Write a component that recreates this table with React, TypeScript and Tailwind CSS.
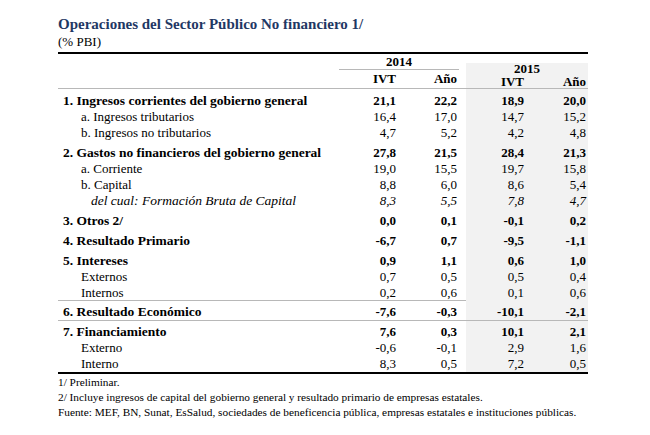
type Row = {
  label: string;
  vals: string[];
  kind: "group" | "sub" | "note";
  line?: boolean;
  tight?: boolean;
};

const rows: Row[] = [
  { label: "1. Ingresos corrientes del gobierno general", vals: ["21,1", "22,2", "18,9", "20,0"], kind: "group" },
  { label: "a. Ingresos tributarios", vals: ["16,4", "17,0", "14,7", "15,2"], kind: "sub" },
  { label: "b. Ingresos no tributarios", vals: ["4,7", "5,2", "4,2", "4,8"], kind: "sub" },
  { label: "2. Gastos no financieros del gobierno general", vals: ["27,8", "21,5", "28,4", "21,3"], kind: "group" },
  { label: "a. Corriente", vals: ["19,0", "15,5", "19,7", "15,8"], kind: "sub" },
  { label: "b. Capital", vals: ["8,8", "6,0", "8,6", "5,4"], kind: "sub" },
  { label: "del cual: Formación Bruta de Capital", vals: ["8,3", "5,5", "7,8", "4,7"], kind: "note" },
  { label: "3. Otros 2/", vals: ["0,0", "0,1", "-0,1", "0,2"], kind: "group" },
  { label: "4. Resultado Primario", vals: ["-6,7", "0,7", "-9,5", "-1,1"], kind: "group" },
  { label: "5. Intereses", vals: ["0,9", "1,1", "0,6", "1,0"], kind: "group" },
  { label: "Externos", vals: ["0,7", "0,5", "0,5", "0,4"], kind: "sub" },
  { label: "Internos", vals: ["0,2", "0,6", "0,1", "0,6"], kind: "sub", tight: true },
  { label: "6. Resultado Económico", vals: ["-7,6", "-0,3", "-10,1", "-2,1"], kind: "group", line: true },
  { label: "7. Financiamiento", vals: ["7,6", "0,3", "10,1", "2,1"], kind: "group", line: true },
  { label: "Externo", vals: ["-0,6", "-0,1", "2,9", "1,6"], kind: "sub" },
  { label: "Interno", vals: ["8,3", "0,5", "7,2", "0,5"], kind: "sub" },
];

const grid = "grid grid-cols-[279px_61px_61px_7px_61px_61px]";

function DataRow({ row }: { row: Row }) {
  const group = row.kind === "group";
  const h = group ? "h-[20px]" : row.tight ? "h-[15px]" : "h-[16px]";
  const text = group ? "font-bold" : row.kind === "note" ? "italic" : "";
  const label = group
    ? "pl-[5px] text-[13.5px]"
    : row.kind === "note"
      ? "pl-[33px] text-[13.5px]"
      : "pl-[23px]";
  return (
    <div className={`${grid} ${h} ${row.line ? "border-t border-[#b8b8b8]" : ""}`}>
      <div className={`flex items-end whitespace-nowrap leading-4 ${label} ${text}`}>{row.label}</div>
      <div className={`flex items-end justify-end pr-[2px] leading-4 ${text}`}>{row.vals[0]}</div>
      <div className={`flex items-end justify-end pr-[2px] leading-4 ${text}`}>{row.vals[1]}</div>
      <div />
      <div className={`flex items-end justify-end bg-[#f2f2f2] pr-[3px] leading-4 ${text}`}>{row.vals[2]}</div>
      <div className={`flex items-end justify-end bg-[#f2f2f2] pr-[2px] leading-4 ${text}`}>{row.vals[3]}</div>
    </div>
  );
}

export default function App() {
  return (
    <div className="h-[435px] w-[650px] bg-white pl-[58px] pt-[14px] text-black [font-family:'Liberation_Serif',serif]">
      <div className="w-[530px]">
        <h1 className="text-[15px] font-bold leading-[20px] text-[#1f3864]">
          Operaciones del Sector Público No financiero 1/
        </h1>
        <div className="text-[13px] leading-[16px]">(% PBI)</div>

        <div className="mt-[2px] border-t-2 border-black text-[13px]">
          {/* cabecera */}
          <div className={`${grid} border-b border-[#b8b8b8] font-bold`}>
            <div />
            <div className="col-span-2">
              <div className="ml-[2px] h-[16px] border-b border-[#b8b8b8] text-center leading-[16px]">2014</div>
              <div className="flex h-[18px] items-center">
                <div className="w-[61px] pr-[2px] text-right">IVT</div>
                <div className="w-[61px] pr-[2px] text-right">Año</div>
              </div>
            </div>
            <div />
            <div className="col-span-2 mt-[9px] bg-[#f2f2f2]">
              <div className="h-[12px] text-center leading-[12px]">2015</div>
              <div className="flex h-[13px] items-center">
                <div className="w-[61px] pr-[3px] text-right">IVT</div>
                <div className="w-[61px] pr-[2px] text-right">Año</div>
              </div>
            </div>
          </div>

          {rows.map((r) => (
            <DataRow key={r.label} row={r} />
          ))}
          <div className="border-t-2 border-black" />
        </div>

        <div className="mt-[1px] text-[11.3px] leading-[15px]">
          <div>1/ Preliminar.</div>
          <div>2/ Incluye ingresos de capital del gobierno general y resultado primario de empresas estatales.</div>
          <div>
            Fuente: MEF, BN, Sunat, EsSalud, sociedades de beneficencia pública, empresas estatales e instituciones
            públicas.
          </div>
        </div>
      </div>
    </div>
  );
}
